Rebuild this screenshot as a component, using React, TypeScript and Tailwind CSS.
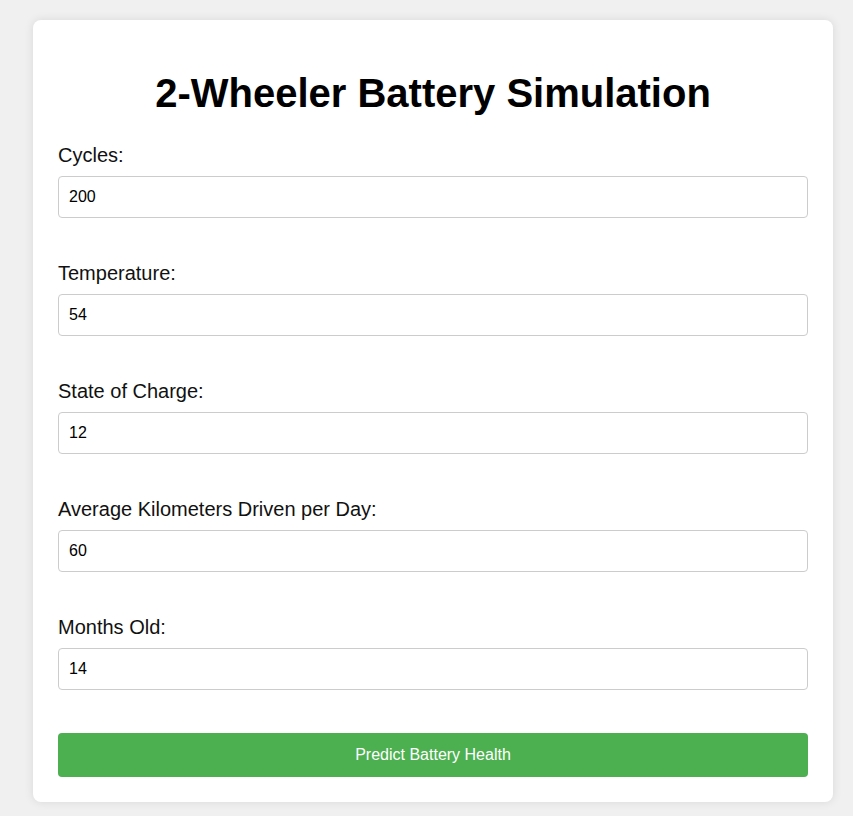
import { useState } from 'react';

const fields = [
  { id: 'cycles', label: 'Cycles:', value: '200' },
  { id: 'temperature', label: 'Temperature:', value: '54' },
  { id: 'soc', label: 'State of Charge:', value: '12' },
  { id: 'km', label: 'Average Kilometers Driven per Day:', value: '60' },
  { id: 'months', label: 'Months Old:', value: '14' },
];

export default function App() {
  const [values, setValues] = useState<Record<string, string>>(
    Object.fromEntries(fields.map(f => [f.id, f.value]))
  );

  return (
    <div className="min-h-[816px] bg-[#f0f0f0] pt-[20px] pl-[33px] font-['Liberation_Sans',Arial,sans-serif]">
      <div className="w-[800px] bg-white rounded-[8px] shadow-[0_0_10px_rgba(0,0,0,0.1)] p-[25px]">
        <h1 className="mt-[25px] mb-[29px] text-center text-[40px] leading-[46px] font-bold text-black">
          2-Wheeler Battery Simulation
        </h1>

        <form onSubmit={e => e.preventDefault()}>
          {fields.map(f => (
            <div key={f.id} className="mb-[45px]">
              <label htmlFor={f.id} className="block mb-[10px] text-[20px] leading-[21px] text-[#111]">
                {f.label}
              </label>
              <input
                id={f.id}
                type="number"
                value={values[f.id]}
                onChange={e => setValues({ ...values, [f.id]: e.target.value })}
                className="block w-full h-[42px] px-[10px] text-[16px] text-black border border-[#ccc] rounded-[4px] outline-none [appearance:textfield]"
              />
            </div>
          ))}

          <button
            type="submit"
            className="block w-full h-[44px] -mt-[2px] bg-[#4caf50] text-white text-[16px] rounded-[4px]"
          >
            Predict Battery Health
          </button>
        </form>
      </div>
    </div>
  );
}
